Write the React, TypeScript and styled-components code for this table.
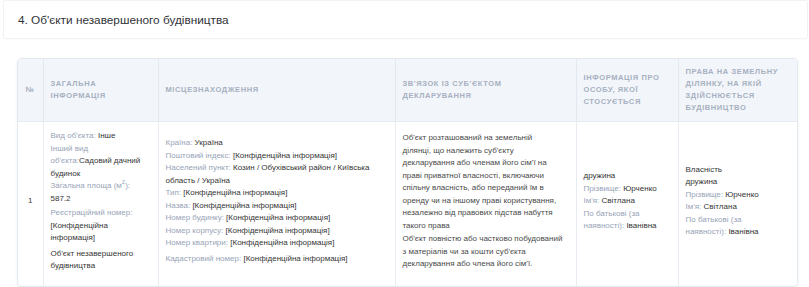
import React from "react";
import styled, { createGlobalStyle } from "styled-components";

const Global = createGlobalStyle`
  html, body { margin: 0; padding: 0; background: #ffffff; }
  body { font-family: "Liberation Sans", Arial, sans-serif; }
`;

const Page = styled.div`
  padding: 0 1px 0 3px;
  font-family: "Liberation Sans", Arial, sans-serif;
`;

const HeadingCard = styled.div`
  height: 37px;
  border: 1px solid #f1f2f4;
  border-radius: 2px;
  display: flex;
  align-items: center;
  padding: 0 14px;
  box-shadow: 0 1px 1px rgba(0, 0, 0, 0.02);
`;

const Heading = styled.h2`
  margin: 0;
  font-size: 11.8px;
  font-weight: 400;
  color: #2f3237;
  line-height: 16px;
`;

const Body = styled.div`
  padding: 19px 10px 0 14px;
`;

const TableWrap = styled.div`
  border: 1px solid #e4e9f0;
  border-radius: 4px;
  box-shadow: 0 1px 3px rgba(30, 40, 60, 0.07);
  overflow: hidden;
`;

const Table = styled.table`
  width: 100%;
  border-collapse: collapse;
  table-layout: fixed;
`;

const Th = styled.th<{ $center?: boolean }>`
  background: #f2f6fb;
  color: #a7b0c0;
  font-size: 7.5px;
  font-weight: 700;
  letter-spacing: 0.6px;
  line-height: 12px;
  text-transform: uppercase;
  text-align: ${(p) => (p.$center ? "center" : "left")};
  vertical-align: middle;
  padding: ${(p) => (p.$center ? "7px 0" : "7px 12px 7px 7px")};
  height: 48px;
  border-bottom: 1px solid #e6ebf2;
  & + & { border-left: 1px solid #e3e8ef; }
`;

const Td = styled.td<{ $center?: boolean; $padRight?: number }>`
  font-size: 8px;
  line-height: 12.5px;
  color: #383838;
  vertical-align: middle;
  text-align: ${(p) => (p.$center ? "center" : "left")};
  padding: ${(p) =>
    p.$center ? "8px 0 13px" : `8px ${p.$padRight ?? 15}px 13px 7px`};
  & + & { border-left: 1px solid #e8ecf2; }
`;

const Field = styled.div<{ $gap?: number }>`
  margin-top: ${(p) => p.$gap ?? 0}px;
`;

const Label = styled.span`
  color: #98a4b7;
`;

const Value = styled.span`
  color: #353535;
`;

const Para = styled.p<{ $gap?: number }>`
  margin: ${(p) => p.$gap ?? 0}px 0 0;
  color: #4a4a4a;
`;

const Sup = styled.sup`
  font-size: 6px;
  line-height: 0;
`;

const relationLines1 = [
  "Об'єкт розташований на земельній",
  "ділянці, що належить суб'єкту",
  "декларування або членам його сім'ї на",
  "праві приватної власності, включаючи",
  "спільну власність, або переданий їм в",
  "оренду чи на іншому праві користування,",
  "незалежно від правових підстав набуття",
  "такого права",
];

const relationLines2 = [
  "Об'єкт повністю або частково побудований",
  "з матеріалів чи за кошти суб'єкта",
  "декларування або члена його сім'ї.",
];

const withBreaks = (lines: string[]) =>
  lines.map((l, i) => (
    <React.Fragment key={i}>
      {i > 0 && <br />}
      {l}
    </React.Fragment>
  ));

export default function App() {
  return (
    <>
      <Global />
      <Page>
        <HeadingCard>
          <Heading>4. Об'єкти незавершеного будівництва</Heading>
        </HeadingCard>
        <Body>
          <TableWrap>
            <Table>
              <colgroup>
                <col style={{ width: 25 }} />
                <col style={{ width: 115 }} />
                <col style={{ width: 237 }} />
                <col style={{ width: 181 }} />
                <col style={{ width: 102 }} />
                <col />
              </colgroup>
              <thead>
                <tr>
                  <Th $center>№</Th>
                  <Th>Загальна інформація</Th>
                  <Th>Місцезнаходження</Th>
                  <Th>Зв'язок із суб'єктом декларування</Th>
                  <Th>Інформація про особу, якої стосується</Th>
                  <Th>Права на земельну ділянку, на якій здійснюється будівництво</Th>
                </tr>
              </thead>
              <tbody>
                <tr>
                  <Td $center>1</Td>
                  <Td>
                    <Field>
                      <Label>Вид об'єкта:</Label> <Value>Інше</Value>
                    </Field>
                    <Field>
                      <Label>Інший вид об'єкта:</Label>
                      <Value>Садовий дачний будинок</Value>
                    </Field>
                    <Field>
                      <Label>
                        Загальна площа (м<Sup>2</Sup>):
                      </Label>{" "}
                      <Value>587.2</Value>
                    </Field>
                    <Field $gap={2}>
                      <Label>Реєстраційний номер:</Label>{" "}
                      <Value>[Конфіденційна інформація]</Value>
                    </Field>
                    <Para $gap={3}>
                      <Value>Об'єкт незавершеного будівництва</Value>
                    </Para>
                  </Td>
                  <Td>
                    <Field>
                      <Label>Країна:</Label> <Value>Україна</Value>
                    </Field>
                    <Field>
                      <Label>Поштовий індекс:</Label>{" "}
                      <Value>[Конфіденційна інформація]</Value>
                    </Field>
                    <Field>
                      <Label>Населений пункт:</Label>{" "}
                      <Value>Козин / Обухівський район / Київська область / Україна</Value>
                    </Field>
                    <Field>
                      <Label>Тип:</Label> <Value>[Конфіденційна інформація]</Value>
                    </Field>
                    <Field>
                      <Label>Назва:</Label> <Value>[Конфіденційна інформація]</Value>
                    </Field>
                    <Field>
                      <Label>Номер будинку:</Label>{" "}
                      <Value>[Конфіденційна інформація]</Value>
                    </Field>
                    <Field>
                      <Label>Номер корпусу:</Label>{" "}
                      <Value>[Конфіденційна інформація]</Value>
                    </Field>
                    <Field>
                      <Label>Номер квартири:</Label>{" "}
                      <Value>[Конфіденційна інформація]</Value>
                    </Field>
                    <Field $gap={3}>
                      <Label>Кадастровий номер:</Label>{" "}
                      <Value>[Конфіденційна інформація]</Value>
                    </Field>
                  </Td>
                  <Td $padRight={6}>
                    <Para>{withBreaks(relationLines1)}</Para>
                    <Para $gap={1}>{withBreaks(relationLines2)}</Para>
                  </Td>
                  <Td>
                    <Field>
                      <Value>дружина</Value>
                    </Field>
                    <Field>
                      <Label>Прізвище:</Label> <Value>Юрченко</Value>
                    </Field>
                    <Field>
                      <Label>Ім'я:</Label> <Value>Світлана</Value>
                    </Field>
                    <Field>
                      <Label>По батькові (за наявності):</Label>{" "}
                      <Value>Іванівна</Value>
                    </Field>
                  </Td>
                  <Td>
                    <Field>
                      <Value>Власність</Value>
                    </Field>
                    <Field>
                      <Value>дружина</Value>
                    </Field>
                    <Field>
                      <Label>Прізвище:</Label> <Value>Юрченко</Value>
                    </Field>
                    <Field>
                      <Label>Ім'я:</Label> <Value>Світлана</Value>
                    </Field>
                    <Field>
                      <Label>По батькові (за наявності):</Label>{" "}
                      <Value>Іванівна</Value>
                    </Field>
                  </Td>
                </tr>
              </tbody>
            </Table>
          </TableWrap>
        </Body>
      </Page>
    </>
  );
}
